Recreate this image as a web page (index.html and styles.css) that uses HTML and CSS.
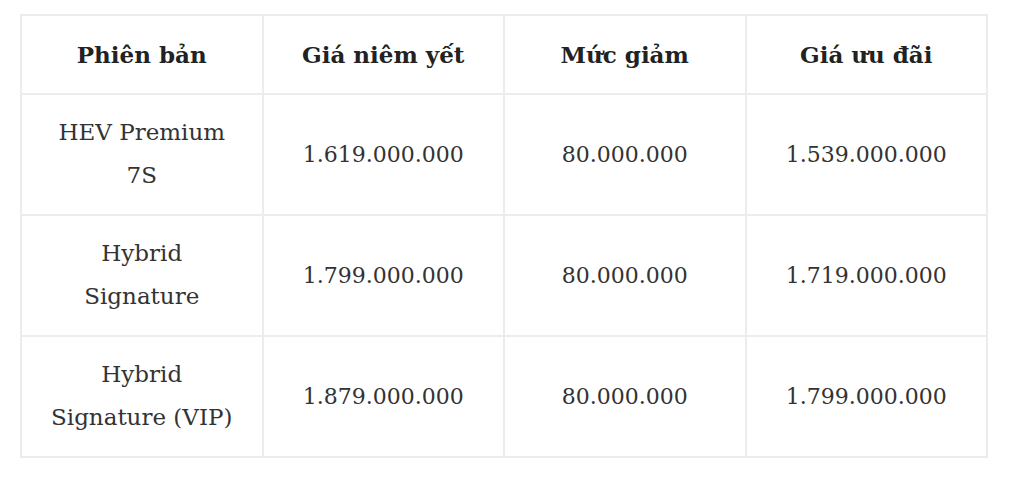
FILE: index.html
```html
<!DOCTYPE html>
<html lang="vi">
<head>
<meta charset="utf-8">
<link rel="stylesheet" href="styles.css">
</head>
<body>
<table class="price-table">
  <thead>
    <tr><th>Phiên bản</th><th>Giá niêm yết</th><th>Mức giảm</th><th>Giá ưu đãi</th></tr>
  </thead>
  <tbody>
    <tr><td class="name">HEV Premium 7S</td><td>1.619.000.000</td><td>80.000.000</td><td>1.539.000.000</td></tr>
    <tr><td class="name">Hybrid Signature</td><td>1.799.000.000</td><td>80.000.000</td><td>1.719.000.000</td></tr>
    <tr><td class="name">Hybrid Signature (VIP)</td><td>1.879.000.000</td><td>80.000.000</td><td>1.799.000.000</td></tr>
  </tbody>
</table>
</body>
</html>
```
FILE: styles.css
```css
html, body { margin: 0; background: #fff; }
body { padding: 14px 0 0 20px; }
.price-table {
  border-collapse: collapse;
  width: 968px;
  table-layout: fixed;
  font-family: "DejaVu Serif", "Liberation Serif", serif;
  font-size: 22px;
  line-height: 43px;
  color: #333;
  border: 2px solid #ececec;
}
.price-table th, .price-table td {
  border: 2px solid #ececec;
  text-align: center;
  vertical-align: middle;
  padding: 16px 24px 17px;
}
.price-table th { font-weight: bold; color: #222; font-size: 23px; padding: 17px 24px 17px; }
.price-table td { height: 86px; }
.price-table td.name { font-size: 23px; }
```
